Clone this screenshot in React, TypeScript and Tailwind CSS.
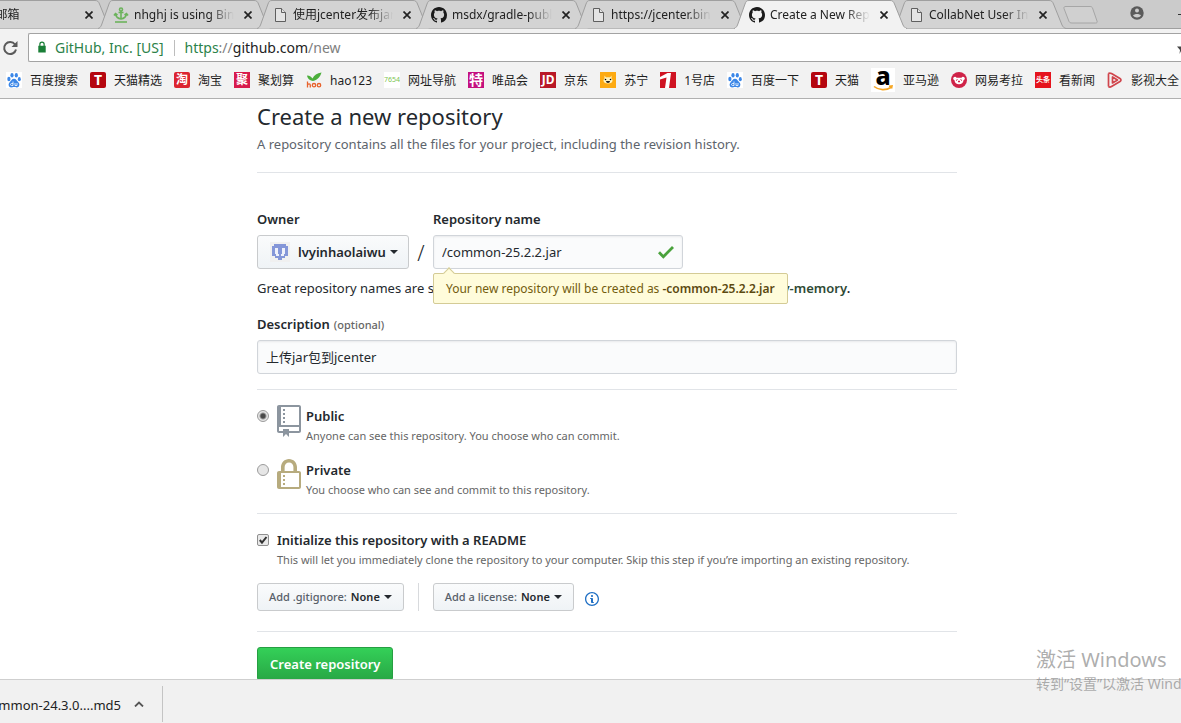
import type { ReactNode } from 'react';

const OCTICONS = {
  check: 'M12 5l-8 8-4-4 1.5-1.5L4 10l6.5-6.5z',
  repo: 'M4 9H3V8h1v1zm0-3H3v1h1V6zm0-2H3v1h1V4zm0-2H3v1h1V2zm8-1v12c0 .55-.45 1-1 1H6v2l-1.5-1.5L3 16v-2H1c-.55 0-1-.45-1-1V1c0-.55.45-1 1-1h10c.55 0 1 .45 1 1zm-1 10H1v2h2v-1h3v1h5v-2zm0-10H2v9h9V1z',
  lock: 'M4 13H3v-1h1v1zm8-6v7c0 .55-.45 1-1 1H1c-.55 0-1-.45-1-1V7c0-.55.45-1 1-1h1V4c0-2.2 1.8-4 4-4s4 1.8 4 4v2h1c.55 0 1 .45 1 1zM3.8 6h4.41V4c0-1.22-.98-2.2-2.2-2.2-1.22 0-2.2.98-2.2 2.2v2H3.8zM11 7H2v7h9V7zM4 8H3v1h1V8zm0 2H3v1h1v-1z',
  info: 'M6.3 5.69a.942.942 0 0 1-.28-.7c0-.28.09-.52.28-.7.19-.18.42-.28.7-.28.28 0 .52.09.7.28.18.19.28.42.28.7 0 .28-.09.52-.28.7a1 1 0 0 1-.7.3c-.28 0-.52-.11-.7-.3zM8 7.99c-.02-.25-.11-.48-.31-.69-.2-.19-.42-.3-.69-.31H6c-.27.02-.48.13-.69.31-.2.2-.3.44-.31.69h1v3c.02.27.11.5.31.69.2.2.42.31.69.31h1c.27 0 .48-.11.69-.31.2-.19.3-.42.31-.69H8V7.98v.01zM7 2.3c-3.14 0-5.7 2.54-5.7 5.68 0 3.14 2.56 5.7 5.7 5.7s5.7-2.55 5.7-5.7c0-3.15-2.56-5.69-5.7-5.69v.01zM7 .98c3.86 0 7 3.14 7 7s-3.14 7-7 7-7-3.12-7-7 3.14-7 7-7z',
  mark: 'M8 0C3.58 0 0 3.58 0 8c0 3.54 2.29 6.53 5.47 7.59.4.07.55-.17.55-.38 0-.19-.01-.82-.01-1.49-2.01.37-2.53-.49-2.69-.94-.09-.23-.48-.94-.82-1.13-.28-.15-.68-.52-.01-.53.63-.01 1.08.58 1.23.82.72 1.21 1.87.87 2.33.66.07-.52.28-.87.51-1.07-1.78-.2-3.64-.89-3.64-3.95 0-.87.31-1.59.82-2.15-.08-.2-.36-1.02.08-2.12 0 0 .67-.21 2.2.82.64-.18 1.32-.27 2-.27.68 0 1.36.09 2 .27 1.53-1.04 2.2-.82 2.2-.82.44 1.1.16 1.92.08 2.12.51.56.82 1.27.82 2.15 0 3.07-1.87 3.75-3.65 3.95.29.25.54.73.54 1.48 0 1.07-.01 1.93-.01 2.2 0 .21.15.46.55.38A8.013 8.013 0 0 0 16 8c0-4.42-3.58-8-8-8z',
};

function Octicon({ name, box, className }: { name: keyof typeof OCTICONS; box: string; className: string }) {
  return (
    <svg viewBox={box} className={className} fill="currentColor" aria-hidden="true">
      <path fillRule="evenodd" d={OCTICONS[name]} />
    </svg>
  );
}

function PageIcon() {
  return (
    <svg viewBox="0 0 16 16" className="size-4" fill="#e4e4e4" stroke="#5f5f5f" aria-hidden="true">
      <path d="M3.500 1.500h6l4 4v9h-10z" />
      <path d="M9.500 1.500v4h4" />
    </svg>
  );
}

function AnchorIcon() {
  return (
    <svg viewBox="0 0 16 16" className="size-4" fill="none" stroke="#6cb35c" strokeWidth="1.600" aria-hidden="true">
      <circle cx="8" cy="2.500" r="1.500" />
      <path d="M8 4v8M5.500 5.500h5M2.500 7c.5 3 2.500 4.500 5.500 5 3-.5 5-2 5.500-5M1 8.500l1.500-2 2 1.500M15 8.500l-1.500-2-2 1.500" />
      <path d="M2 15h12" />
    </svg>
  );
}

const mark = <Octicon name="mark" box="0 0 16 16" className="size-4 text-[#1b1b1b]" />;

const TABS: { title: string; icon?: ReactNode; active?: boolean }[] = [
  { title: '126邮箱' },
  { title: 'nhghj is using Bintray', icon: <AnchorIcon /> },
  { title: '使用jcenter发布jar包', icon: <PageIcon /> },
  { title: 'msdx/gradle-publish', icon: mark },
  { title: 'https://jcenter.bintray', icon: <PageIcon /> },
  { title: 'Create a New Repository', icon: mark, active: true },
  { title: 'CollabNet User Information', icon: <PageIcon /> },
];

function Tab({ title, icon, active }: { title: string; icon?: ReactNode; active?: boolean }) {
  return (
    <div className={`relative -mr-[14px] h-[29px] w-[173px] shrink-0 ${active ? 'z-10' : ''}`}>
      <svg viewBox="0 0 173 29" className="absolute inset-0 size-full" aria-hidden="true">
        <path
          d="M0 28.500C2 28 2.500 27 3.500 25L11 4C12 1.500 12.500.5 15 .5H156C158.500 .5 159.500 1.500 160.500 4L169 25C170 27 171 28 173 28.500"
          fill={active ? '#f2f2f2' : '#d3d3d3'}
          stroke="#9f9f9f"
        />
        {active && <path d="M1 29h171" stroke="#f2f2f2" strokeWidth="2" />}
      </svg>
      <div className="relative flex h-[29px] items-center pr-[19px] pl-[15px]">
        <span className="size-4 shrink-0">{icon}</span>
        <span className="ml-[5px] min-w-0 flex-1 overflow-hidden text-xs whitespace-nowrap text-[#222] [mask-image:linear-gradient(to_right,#000_74%,transparent_98%)]">
          {title}
        </span>
        <button type="button" aria-label={`Close ${title}`} className="ml-2">
          <svg viewBox="0 0 8 8" className="size-2" stroke="#222" strokeWidth="1.700" aria-hidden="true">
            <path d="M.5.5l7 7M7.500.5l-7 7" />
          </svg>
        </button>
      </div>
    </div>
  );
}

function Tile({ className, children }: { className: string; children: ReactNode }) {
  return (
    <span aria-hidden="true" className={`flex size-4 items-center justify-center overflow-hidden font-bold text-white ${className}`}>
      {children}
    </span>
  );
}

function BaiduIcon() {
  return (
    <svg viewBox="0 0 16 16" className="size-4" fill="#3b87e8" aria-hidden="true">
      <rect width="16" height="16" fill="#fff" />
      <ellipse cx="2.900" cy="7" rx="1.600" ry="2.200" />
      <ellipse cx="6" cy="3.300" rx="1.600" ry="2.300" />
      <ellipse cx="10.300" cy="3.300" rx="1.600" ry="2.300" />
      <ellipse cx="13.300" cy="7.200" rx="1.500" ry="2.100" />
      <path d="M8 6.800c2.200 0 2.700 2 4.300 3.400 2 1.900 1 5.300-1.500 5.200-1.300 0-1.800-.4-2.800-.4s-1.600.4-2.800.4c-2.600 0-3.500-3.200-1.500-5.200C5.300 8.800 5.800 6.800 8 6.800z" />
      <path d="M7 9.500v4H5.500c-1.300 0-1.300-2 0-2H7M9 11v2.500h2V11" fill="none" stroke="#fff" strokeWidth=".8" />
    </svg>
  );
}

const BOOKMARKS: { title: string; icon: ReactNode }[] = [
  { title: '百度搜索', icon: <BaiduIcon /> },
  { title: '天猫精选', icon: <Tile className="rounded-xs bg-[#b5060f] text-sm leading-4">T</Tile> },
  { title: '淘宝', icon: <Tile className="rounded-xs bg-[#dc2430] text-xs leading-4">淘</Tile> },
  { title: '聚划算', icon: <Tile className="bg-[#d81a4c] text-xs leading-4">聚</Tile> },
  {
    title: 'hao123',
    icon: (
      <svg viewBox="0 0 16 16" className="size-4" aria-hidden="true">
        <path d="M1 3.500c3 0 4.500 1.500 5.500 3C8 3.500 11 1 15.500.5 14.500 4 12 8 7 9 4.500 8.500 1.500 7 1 3.500z" fill="#4caf3c" />
        <path d="M1.500 9.500v6M1.500 13c.5-1.500 2.800-1.500 2.800.2v2.300" fill="none" stroke="#e8622c" strokeWidth="1.300" />
        <circle cx="8" cy="13.200" r="1.700" fill="none" stroke="#e8622c" strokeWidth="1.300" />
        <circle cx="13" cy="13.200" r="1.700" fill="none" stroke="#e8622c" strokeWidth="1.300" />
      </svg>
    ),
  },
  { title: '网址导航', icon: <Tile className="bg-white text-[7px] leading-4 font-normal text-[#7cc552]!">7654</Tile> },
  { title: '唯品会', icon: <Tile className="bg-[#c4107f] text-sm leading-4">特</Tile> },
  { title: '京东', icon: <Tile className="bg-[#b91827] text-xs leading-4">JD</Tile> },
  {
    title: '苏宁',
    icon: (
      <svg viewBox="0 0 16 16" className="size-4" aria-hidden="true">
        <rect width="16" height="16" fill="#fdaa12" />
        <path d="M4.500 6V3.500L6 5.500h4l1.500-2V6" fill="#fff3c0" />
        <ellipse cx="8" cy="8.500" rx="4.500" ry="3" fill="#fff3c0" />
        <circle cx="5.500" cy="7.500" r=".8" />
        <circle cx="10.500" cy="7.500" r=".8" />
        <path d="M6 9h4c0 2.500-4 2.500-4 0z" fill="#222" />
      </svg>
    ),
  },
  {
    title: '1号店',
    icon: (
      <svg viewBox="0 0 16 16" className="size-4" aria-hidden="true">
        <rect width="16" height="16" fill="#cf1322" />
        <path d="M0 5L7.500 1H11L9 16H5L6.500 5.500 0 7.500z" fill="#fff" />
      </svg>
    ),
  },
  { title: '百度一下', icon: <BaiduIcon /> },
  { title: '天猫', icon: <Tile className="rounded-xs bg-[#b5060f] text-sm leading-4">T</Tile> },
  {
    title: '亚马逊',
    icon: (
      <span aria-hidden="true" className="relative flex size-6 justify-center bg-white text-[25px] leading-[15px] font-extrabold text-black">
        a
        <svg viewBox="0 0 24 24" className="absolute inset-0 size-6" fill="none" stroke="#f6a623" strokeWidth="1.600">
          <path d="M3 18.500c5 4 12 4 17 1M18 18.300l3-.3-.5 2.500" />
        </svg>
      </span>
    ),
  },
  {
    title: '网易考拉',
    icon: (
      <svg viewBox="0 0 16 16" className="size-4" aria-hidden="true">
        <circle cx="8" cy="8" r="8" fill="#cf2348" />
        <path d="M2.500 5.500c1-1 2.500-.8 3 .2h5c.5-1 2-1.200 3-.2.8 1.200 0 2.500-1 2.700C12.300 11 10.500 12.300 8 12.300S3.700 11 3.500 8.200c-1-.2-1.800-1.500-1-2.700z" fill="#fff" />
        <path d="M5 8.500l1.500-1M11 8.500l-1.500-1M7.500 9v1h1V9z" stroke="#cf2348" fill="#cf2348" />
      </svg>
    ),
  },
  { title: '看新闻', icon: <Tile className="bg-[#e5131d] text-[7px] leading-4">头条</Tile> },
  {
    title: '影视大全',
    icon: (
      <svg viewBox="0 0 16 16" className="size-4" fill="none" stroke="#d0454c" strokeWidth="1.700" strokeLinejoin="round" aria-hidden="true">
        <path d="M1.500 1.500v13M1.500 1.500c1-.8 2-.5 3 0l8.500 5c1.300.8 1.300 2.200 0 3l-8.500 5c-1 .6-2 .8-3 0" />
        <path d="M5.500 5v6l5-3z" />
      </svg>
    ),
  },
];

function Browser() {
  return (
    <header className="shrink-0 border-b border-[#b0b0b0] bg-[#f2f2f2]">
      <div className="relative flex h-[29px] overflow-hidden bg-[#cbcbcb] shadow-[inset_0_-1px_0_#9f9f9f]">
        <div className="-ml-[61px] flex shrink-0">
          {TABS.map((tab) => (
            <Tab key={tab.title} {...tab} />
          ))}
        </div>
        <button type="button" aria-label="New tab" className="ml-[10px] self-start pt-[6px]">
          <svg viewBox="0 0 36 18" className="h-[18px] w-9" fill="#d0d0d0" stroke="#a6a6a6" aria-hidden="true">
            <path d="M4 .5h24c1.500 0 2 .5 2.500 1.500l4.500 13c.5 1.500 0 2-1.500 2H10c-1.500 0-2.500-.5-3-1.500L2 2.500c-.5-1.500.5-2 2-2z" />
          </svg>
        </button>
        <div className="flex-1" />
        <button type="button" aria-label="Account" className="mr-[37px] self-start pt-[6px]">
          <svg viewBox="0 0 14 14" className="size-[14px]" aria-hidden="true">
            <circle cx="7" cy="7" r="6.700" fill="#5a5a5a" />
            <circle cx="7" cy="4.500" r="2" fill="#cbcbcb" />
            <path d="M3 9.500c1.500-2 6.500-2 8 0-1.500 2.500-6.500 2.500-8 0z" fill="#cbcbcb" />
          </svg>
        </button>
        <span aria-hidden="true" className="absolute top-[14px] right-0 h-px w-[3px] bg-[#333]" />
      </div>

      <div className="flex items-center pt-1">
        <button type="button" aria-label="Reload" className="ml-[2px] shrink-0">
          <svg viewBox="0 0 16 16" className="size-4" fill="none" stroke="#5a5a5a" strokeWidth="2" aria-hidden="true">
            <path d="M13 4.500A6 6 0 1 0 14 9.500" />
            <path d="M15.500 1v6h-6z" fill="#5a5a5a" stroke="none" />
          </svg>
        </button>
        <div className="ml-[10px] flex h-[29px] min-w-0 flex-1 items-center overflow-hidden rounded-l-xs border border-r-0 border-[#a3a3a3] bg-white pl-2 text-sm">
          <svg viewBox="0 0 10 14" className="h-[13px] w-[10px]" fill="#1a7f37" aria-hidden="true">
            <path d="M1 5h8v7.500H1z" />
            <path d="M2.700 6V3.500a2.300 2.300 0 0 1 4.600 0V6" fill="none" stroke="#1a7f37" strokeWidth="1.300" />
          </svg>
          <span className="ml-2 text-[#2c8249]">GitHub, Inc. [US]</span>
          <span aria-hidden="true" className="mx-[10px] h-4 w-px bg-[#bdbdbd]" />
          <div role="textbox" aria-label="Address" className="flex-1 text-[#222]">
            <span className="text-[#2c8249]">https</span>
            <span className="text-[#808080]">://</span>github.com<span className="text-[#808080]">/new</span>
          </div>
          <svg viewBox="0 0 4 12" className="h-3 w-1" fill="#444" aria-hidden="true">
            <path d="M0 4.500h4V9L2.500 12 3 8z" />
          </svg>
        </div>
      </div>

      <nav className="flex h-9 items-center gap-3 overflow-hidden pl-[6px] text-xs whitespace-nowrap text-[#1e1e1e]">
        {BOOKMARKS.map((item) => (
          <a key={item.title} href="#" className="flex shrink-0 items-center gap-2">
            {item.icon}
            <span className="pt-px">{item.title}</span>
          </a>
        ))}
      </nav>
    </header>
  );
}

function PickerButton({ id, label, value, children, className }: { id: string; label: string; value: string; children?: ReactNode; className: string }) {
  return (
    <div className={`relative flex items-center rounded-[3px] border border-[#c9cbcd] bg-linear-to-b from-[#fafbfc] to-[#eff3f6] font-semibold text-[#24292e] ${className}`}>
      {children ?? (
        <label htmlFor={id} className="mr-1 font-medium text-[#586069]">
          {label}
        </label>
      )}
      <select id={id} aria-label={label} className="[field-sizing:content] appearance-none bg-transparent font-semibold">
        <option>{value}</option>
      </select>
      <svg viewBox="0 0 8 4" className="ml-1 h-1 w-2" fill="currentColor" aria-hidden="true">
        <path d="M0 0h8L4 4z" />
      </svg>
    </div>
  );
}

function Avatar() {
  return (
    <svg viewBox="0 0 20 20" className="mr-2 size-5" fill="#8496d8" aria-hidden="true">
      <rect width="20" height="20" fill="#f0f0f0" />
      <path d="M4 2h12v2h2v10h-3v2h-3v2H8v-2H5v-2H2V4h2z" />
      <path d="M5 6h3v6h1v2H6v-2H5zM12 6h3v6h-1v2h-3v-2h1z" fill="#eef0fa" />
    </svg>
  );
}

function Visibility({ id, title, note, checked, children }: { id: string; title: string; note: string; checked?: boolean; children: ReactNode }) {
  return (
    <div className="flex h-[38px] items-start">
      <input
        id={id}
        type="radio"
        name="visibility"
        defaultChecked={checked}
        className="mt-[7px] size-3 shrink-0 appearance-none rounded-full border border-[#9c9c9c] bg-[#e6e6e6] checked:bg-[radial-gradient(circle,#4a4a4a_0_2px,#e6e6e6_4px)]"
      />
      <span className="mr-[5px] ml-2 flex w-6 justify-center pt-[2px]">{children}</span>
      <label htmlFor={id} className="block">
        <span className="block text-[13px] leading-[26px] font-semibold">{title}</span>
        <span className="block text-[11px] leading-[14px] text-[#666]">{note}</span>
      </label>
    </div>
  );
}

function NewRepository() {
  return (
    <main className="min-h-0 flex-1 overflow-hidden pl-[33px] text-[13px] leading-5 text-[#24292e]">
      <form className="mx-auto max-w-[700px]" onSubmit={(e) => e.preventDefault()}>
        <div className="border-b border-[#e1e4e8] pb-[18px]">
          <h1 className="text-[22px] leading-[35px]">Create a new repository</h1>
          <p className="text-[#5d646c]">A repository contains all the files for your project, including the revision history.</p>
        </div>

        <div className="mt-9 flex">
          <div className="w-[152px]">
            <label htmlFor="owner" className="block font-semibold">Owner</label>
            <PickerButton id="owner" label="Owner" value="lvyinhaolaiwu" className="mt-[6px] h-[34px] pl-3">
              <Avatar />
            </PickerButton>
          </div>
          <span className="w-6 pt-8 text-center text-[21px] leading-6 font-light">/</span>
          <div className="w-[250px]">
            <label htmlFor="repo-name" className="block font-semibold">Repository name</label>
            <div className="relative mt-[6px]">
              <input
                id="repo-name"
                defaultValue="/common-25.2.2.jar"
                className="h-[34px] w-full rounded-[3px] border border-[#d1d5da] bg-[#fafbfc] px-2 shadow-[inset_0_1px_2px_rgba(27,31,35,0.075)]"
              />
              <Octicon name="check" box="0 0 12 16" className="absolute top-[6px] right-[9px] h-[22px] w-4 text-[#4aa23c]" />
              <div role="tooltip" className="absolute top-[38px] left-0 h-[31px] rounded-xs border border-[#d4cb96] bg-[#fffcdb] px-3 text-xs leading-[30px] whitespace-nowrap text-[#735c0f]">
                <span aria-hidden="true" className="absolute -top-[5px] left-[11px] size-2 rotate-45 border-t border-l border-[#d4cb96] bg-[#fffcdb]" />
                Your new repository will be created as <strong className="font-semibold text-[#5c4a10]">-common-25.2.2.jar</strong>
              </div>
            </div>
          </div>
        </div>
        <p className="mt-[9px] whitespace-nowrap">
          Great repository names are short and memorable. Need inspiration? How about{' '}
          <strong className="font-semibold text-[#2f4a35]">cuddly-memory</strong>
          <strong className="font-semibold">.</strong>
        </p>

        <div className="mt-4 border-b border-[#e1e4e8] pb-[15px]">
          <label htmlFor="description" className="flex items-baseline gap-1 font-semibold">
            Description <span className="text-[11px] font-medium text-[#666]">(optional)</span>
          </label>
          <input
            id="description"
            defaultValue="上传jar包到jcenter"
            className="mt-[5px] h-[34px] w-full rounded-[3px] border border-[#d1d5da] bg-[#fafbfc] px-2 pb-px shadow-[inset_0_1px_2px_rgba(27,31,35,0.075)]"
          />
        </div>

        <div className="flex flex-col gap-4 border-b border-[#e1e4e8] pt-[13px] pb-[18px]">
          <Visibility id="public" title="Public" note="Anyone can see this repository. You choose who can commit." checked>
            <Octicon name="repo" box="0 0 12 16" className="h-8 w-6 text-[#8c959f]" />
          </Visibility>
          <Visibility id="private" title="Private" note="You choose who can see and commit to this repository.">
            <Octicon name="lock" box="0 0 12 16" className="h-8 w-6 text-[#b7ab7e]" />
          </Visibility>
        </div>

        <div className="border-b border-[#e1e4e8] pt-4 pb-5">
          <div className="flex items-start">
            <span className="relative mt-1 mr-2 size-3">
              <input id="readme" type="checkbox" defaultChecked className="block size-3 appearance-none rounded-xs border border-[#8f8f8f] bg-[#e9e9e9]" />
              <svg viewBox="0 0 12 12" className="pointer-events-none absolute inset-0 size-3" fill="none" stroke="#333" strokeWidth="2" aria-hidden="true">
                <path d="M2.800 6l2.200 2.700L9.500 3" />
              </svg>
            </span>
            <label htmlFor="readme" className="block">
              <span className="block font-semibold">Initialize this repository with a README</span>
              <span className="block text-[11px] text-[#666]">
                This will let you immediately clone the repository to your computer. Skip this step if you’re importing an existing repository.
              </span>
            </label>
          </div>
          <div className="mt-[13px] flex h-7 items-center text-[11px]">
            <PickerButton id="gitignore" label="Add .gitignore:" value="None" className="h-7 px-[11px]" />
            <span aria-hidden="true" className="mx-[14px] h-7 w-px bg-[#d8dadd]" />
            <PickerButton id="license" label="Add a license:" value="None" className="h-7 px-[11px]" />
            <Octicon name="info" box="0 0 14 16" className="mt-1 ml-[11px] h-4 w-[14px] text-[#1f6fc4]" />
          </div>
        </div>

        <button type="submit" className="mt-[15px] h-[34px] rounded-[3px] border border-[#269f42] bg-linear-to-b from-[#34d058] to-[#28a745] px-3 font-semibold text-white">
          Create repository
        </button>
      </form>
    </main>
  );
}

export default function App() {
  return (
    <div className="relative flex h-screen flex-col overflow-hidden bg-white font-['Noto_Sans','Noto_Sans_CJK_SC',sans-serif]">
      <Browser />
      <NewRepository />
      <footer className="flex h-11 shrink-0 items-center overflow-hidden border-t border-[#cfcfcf] bg-[#f1f1f1] pt-1 text-[13px] text-[#222]">
        <div className="flex w-[121px] justify-end pt-1 whitespace-nowrap">common-24.3.0....md5</div>
        <button type="button" aria-label="Download options" className="ml-[13px]">
          <svg viewBox="0 0 10 6" className="h-[6px] w-[10px]" fill="none" stroke="#555" strokeWidth="1.800" aria-hidden="true">
            <path d="M1 5.500l4-4 4 4" />
          </svg>
        </button>
        <span aria-hidden="true" className="ml-[18px] h-9 w-px bg-[#c4c4c4]" />
      </footer>

      <div className="pointer-events-none absolute right-0 bottom-[29px] w-[145px] overflow-hidden whitespace-nowrap text-[#8a8a8a]/70">
        <p className="text-xl leading-7">激活 Windows</p>
        <p className="text-sm leading-5">转到“设置”以激活 Windows。</p>
      </div>
    </div>
  );
}
